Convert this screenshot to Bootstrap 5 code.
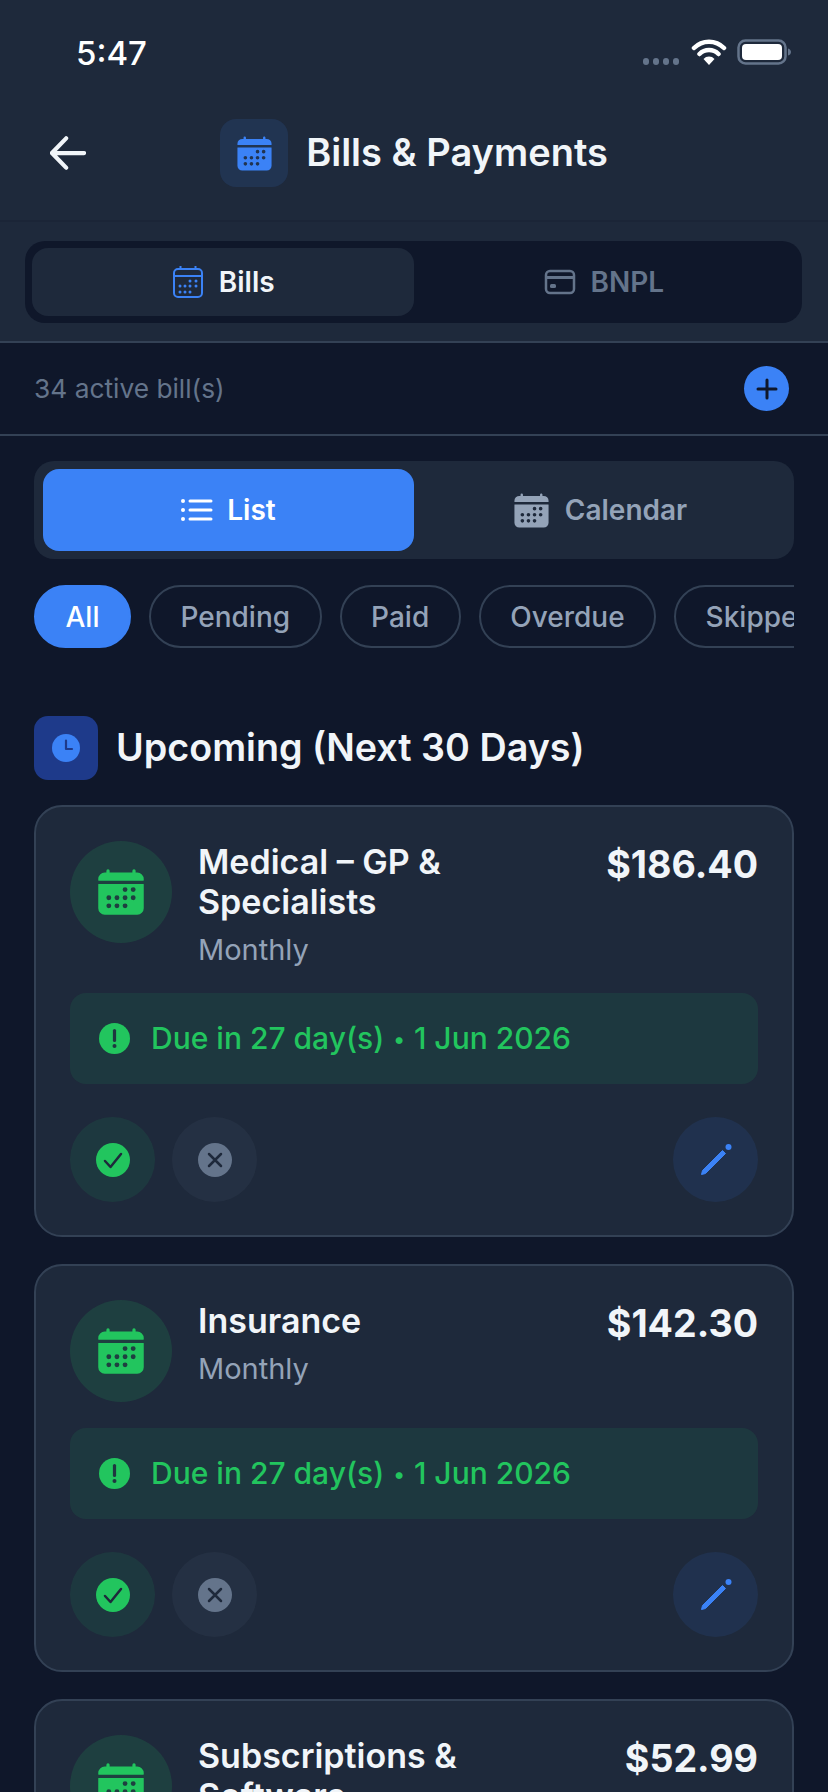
<!DOCTYPE html>
<html lang="en">
<head>
  <meta charset="UTF-8" />
  <meta name="viewport" content="width=device-width, initial-scale=1.0"/>
  <title>Bills &amp; Payments</title>
  <link href="https://cdn.jsdelivr.net/npm/bootstrap@5.3.4/dist/css/bootstrap.min.css" rel="stylesheet"/>
  <style>
    html, body { height: 1792px; overflow: hidden; }
    body { background-color: #0f172a; color: #f1f5f9; font-family: Inter, "Liberation Sans", sans-serif; }
    .top-pane { background-color: #1e293b; }
    .status-row { height: 96px; padding: 8px 35px 0 76px; }
    .clock-text { font-size: 33px; font-weight: 500; color: #fff; margin-top: 3px; }
    .signal-dot { width: 6px; height: 7px; border-radius: 3px; background-color: #64748b; margin-right: 4px; margin-top: 19px; }
    .wifi-icon { margin-left: 8px; margin-right: 10px; }
    .app-header { height: 126px; padding: 0 0 10px; border-bottom: 2px solid #1b2537; }
    .header-side { width: 120px; padding-left: 50px; }
    .header-icon { width: 68px; height: 68px; border-radius: 16px; background-color: rgba(59,130,246,.12); color: #3b82f6; }
    .header-title { font-size: 38px; font-weight: 600; margin: 0 0 0 18px; }
    .tab-wrap { padding: 19px 26px 18px 25px; }
    .tab-track { height: 82px; padding: 7px; border-radius: 20px; background-color: #0f172a; }
    .tab-item { border-radius: 16px; font-size: 28px; font-weight: 600; color: #64748b; gap: 14px; height: 68px; }
    .tab-item.is-on { background-color: #1e293b; color: #f1f5f9; }
    .tab-cal { color: #3b82f6; }
    .summary-row { height: 95px; padding: 0 39px 0 34px; border-top: 2px solid #334155; border-bottom: 2px solid #334155; font-size: 26.3px; color: #64748b; }
    .add-btn { width: 45px; height: 45px; border-radius: 50%; background-color: #3b82f6; color: #0f172a; }
    .page-body { padding: 25px 34px 0; }
    .view-track { height: 98px; padding: 8px 9px; border-radius: 20px; background-color: #1e293b; }
    .view-item { height: 82px; border-radius: 16px; font-size: 28px; font-weight: 600; color: #94a3b8; gap: 14px; }
    .view-item.is-on { background-color: #3b82f6; color: #fff; }
    .chip-row { margin-top: 26px; gap: 18px; overflow: hidden; }
    .chip-item { height: 63px; padding: 0 29.5px; border: 2px solid #334155; border-radius: 32px; font-size: 28px; font-weight: 500; color: #94a3b8; white-space: nowrap; flex-shrink: 0; }
    .chip-item.is-on { background-color: #3b82f6; border-color: #3b82f6; color: #fff; }
    .section-head { margin-top: 68px; margin-bottom: 25px; gap: 18px; }
    .section-icon { width: 64px; height: 64px; border-radius: 14px; background-color: #1e3a8a; color: #3b82f6; }
    .section-title { font-size: 37.7px; font-weight: 600; margin: 0; }
    .bill-card { background-color: #1e293b; border: 2px solid #334155; border-radius: 28px; padding: 34px 34px 33px; margin-bottom: 27px; }
    .bill-top { gap: 26px; margin-bottom: 26px; }
    .bill-icon { width: 102px; height: 102px; border-radius: 50%; background-color: rgba(34,197,94,.15); color: #22c55e; flex-shrink: 0; }
    .bill-name { font-size: 34px; font-weight: 600; line-height: 40px; padding-top: 1px; }
    .bill-freq { font-size: 29px; line-height: 35px; margin-top: 10px; color: #94a3b8; }
    .bill-amount { font-size: 37.6px; font-weight: 700; line-height: 50px; margin-top: -1px; white-space: nowrap; }
    .due-box { height: 91px; padding-left: 29px; gap: 21px; border-radius: 16px; background-color: rgba(34,197,94,.1); color: #22c55e; font-size: 30px; font-weight: 500; }
    .due-dot { font-size: 22px; vertical-align: 2px; margin: 0 1px; }
    .action-row { margin-top: 33px; }
    .round-btn { width: 85px; height: 85px; border-radius: 50%; }
    .round-ok { background-color: rgba(34,197,94,.1); color: #22c55e; }
    .round-skip { background-color: rgba(100,116,139,.1); color: #64748b; margin-left: 17px; }
    .round-edit { background-color: rgba(59,130,246,.1); color: #3b82f6; }
  </style>
</head>
<body>
  <svg width="0" height="0" class="d-block">
    <symbol id="cal-fill" viewBox="0 0 512 512">
      <path fill="currentColor" fill-rule="evenodd" d="M480 128a64 64 0 00-64-64h-16V48.45c0-8.61-6.62-16-15.23-16.43A16 16 0 00368 48v16H144V48.45c0-8.61-6.62-16-15.23-16.43A16 16 0 00112 48v16H96a64 64 0 00-64 64v12a4 4 0 004 4h440a4 4 0 004-4zM32 416a64 64 0 0064 64h320a64 64 0 0064-64V179a3 3 0 00-3-3H35a3 3 0 00-3 3zm344-208a24 24 0 11-24 24 24 24 0 0124-24zm0 80a24 24 0 11-24 24 24 24 0 0124-24zm-80-80a24 24 0 11-24 24 24 24 0 0124-24zm0 80a24 24 0 11-24 24 24 24 0 0124-24zm0 80a24 24 0 11-24 24 24 24 0 0124-24zm-80-80a24 24 0 11-24 24 24 24 0 0124-24zm0 80a24 24 0 11-24 24 24 24 0 0124-24zm-80-80a24 24 0 11-24 24 24 24 0 0124-24zm0 80a24 24 0 11-24 24 24 24 0 0124-24z"/>
    </symbol>
    <symbol id="cal-line" viewBox="0 0 34 34">
      <g fill="none" stroke="currentColor" stroke-width="2"><rect x="3" y="4" width="28" height="28" rx="4"/><path d="M3 11h28M9.500 1v4M24.500 1v4"/></g>
      <g fill="currentColor"><circle cx="19" cy="16" r="1.500"/><circle cx="25" cy="16" r="1.500"/><circle cx="9" cy="21" r="1.500"/><circle cx="14" cy="21" r="1.500"/><circle cx="19" cy="21" r="1.500"/><circle cx="25" cy="21" r="1.500"/><circle cx="9" cy="27" r="1.500"/><circle cx="14" cy="27" r="1.500"/><circle cx="19" cy="27" r="1.500"/></g>
    </symbol>
    <symbol id="check-dot" viewBox="0 0 34 34">
      <circle cx="17" cy="17" r="17" fill="currentColor"/>
      <path d="M9 18l5.500 6L25 11" fill="none" stroke="#1e293b" stroke-width="2.500" stroke-linecap="round" stroke-linejoin="round"/>
    </symbol>
    <symbol id="skip-dot" viewBox="0 0 34 34">
      <circle cx="17" cy="17" r="17" fill="currentColor"/>
      <path d="M11 11l12 12M23 11L11 23" fill="none" stroke="#1e293b" stroke-width="2.500" stroke-linecap="round"/>
    </symbol>
    <symbol id="pencil" viewBox="0 0 40 40">
      <path d="M5.500 34.500l1-4L26.500 10.500l3 3-20 20z" fill="currentColor" stroke="currentColor" stroke-width="1" stroke-linejoin="round"/>
      <circle cx="32.500" cy="7" r="3" fill="currentColor"/>
    </symbol>
    <symbol id="alert-dot" viewBox="0 0 31 31">
      <circle cx="15.500" cy="15.500" r="15.500" fill="currentColor"/>
      <path d="M15.500 7.500v10" stroke="#1f3740" stroke-width="3.200" stroke-linecap="round"/>
      <circle cx="15.500" cy="23" r="2" fill="#1f3740"/>
    </symbol>
  </svg>

  <div class="top-pane">
    <div class="status-row d-flex align-items-center justify-content-between">
      <span class="clock-text">5:47</span>
      <div class="d-flex align-items-center">
        <span class="signal-dot"></span><span class="signal-dot"></span><span class="signal-dot"></span><span class="signal-dot"></span>
        <svg class="wifi-icon" width="36" height="28" viewBox="0 0 36 28">
          <path d="M3 10a21 21 0 0 1 30 0M8.500 16a13.500 13.500 0 0 1 19 0" fill="none" stroke="#fff" stroke-width="4.500" stroke-linecap="round"/>
          <path d="M12.500 21a7.500 7.500 0 0 1 11 0L18 27z" fill="#fff"/>
        </svg>
        <svg width="56" height="26" viewBox="0 0 56 26">
          <rect x="1.500" y="1.500" width="47" height="23" rx="7" fill="none" stroke="#64748b" stroke-width="2.500"/>
          <rect x="5" y="5" width="40" height="16" rx="4" fill="#fff"/>
          <path d="M51 9.500c2 .5 3 2 3 3.500s-1 3-3 3.500z" fill="#64748b"/>
        </svg>
      </div>
    </div>

    <div class="app-header d-flex align-items-center">
      <div class="header-side">
        <svg class="d-block" width="36" height="34" viewBox="0 0 38 36"><path d="M36 18H3M17 2.500L2 18l15 15.500" fill="none" stroke="#f1f5f9" stroke-width="4.500" stroke-linecap="round" stroke-linejoin="round"/></svg>
      </div>
      <div class="flex-grow-1 d-flex align-items-center justify-content-center">
        <div class="header-icon d-flex align-items-center justify-content-center">
          <svg width="39" height="39"><use href="#cal-fill"/></svg>
        </div>
        <h1 class="header-title">Bills &amp; Payments</h1>
      </div>
      <div class="header-side"></div>
    </div>

    <div class="tab-wrap">
      <div class="tab-track row g-0">
        <div class="col-6 tab-item is-on d-flex align-items-center justify-content-center">
          <svg class="tab-cal" width="34" height="34"><use href="#cal-line"/></svg>
          <span>Bills</span>
        </div>
        <div class="col-6 tab-item d-flex align-items-center justify-content-center">
          <svg width="32" height="26" viewBox="0 0 32 26"><rect x="2" y="2" width="28" height="22" rx="4" fill="none" stroke="currentColor" stroke-width="2.500"/><path d="M2 7h28v3H2z" fill="currentColor"/><rect x="6" y="15" width="6" height="4" rx="1.500" fill="currentColor"/></svg>
          <span>BNPL</span>
        </div>
      </div>
    </div>
  </div>

  <div class="summary-row d-flex align-items-center justify-content-between">
    <span>34 active bill(s)</span>
    <div class="add-btn d-flex align-items-center justify-content-center">
      <svg width="22" height="22" viewBox="0 0 22 22"><path d="M11 2v18M2 11h18" fill="none" stroke="currentColor" stroke-width="3" stroke-linecap="round"/></svg>
    </div>
  </div>

  <div class="page-body">
    <div class="view-track row g-0">
      <div class="col-6 view-item is-on d-flex align-items-center justify-content-center">
        <svg width="32" height="24" viewBox="0 0 32 24"><path d="M9 3h21M9 12h21M9 21h21" fill="none" stroke="currentColor" stroke-width="3" stroke-linecap="round"/><circle cx="2" cy="3" r="2" fill="currentColor"/><circle cx="2" cy="12" r="2" fill="currentColor"/><circle cx="2" cy="21" r="2" fill="currentColor"/></svg>
        <span>List</span>
      </div>
      <div class="col-6 view-item d-flex align-items-center justify-content-center">
        <svg width="39" height="39"><use href="#cal-fill"/></svg>
        <span>Calendar</span>
      </div>
    </div>

    <div class="chip-row d-flex">
      <div class="chip-item is-on d-flex align-items-center">All</div>
      <div class="chip-item d-flex align-items-center">Pending</div>
      <div class="chip-item d-flex align-items-center">Paid</div>
      <div class="chip-item d-flex align-items-center">Overdue</div>
      <div class="chip-item d-flex align-items-center">Skipped</div>
    </div>

    <div class="section-head d-flex align-items-center">
      <div class="section-icon d-flex align-items-center justify-content-center">
        <svg width="28" height="28" viewBox="0 0 28 28"><circle cx="14" cy="14" r="14" fill="currentColor"/><path d="M14 6.500V15h6" fill="none" stroke="#1e3a8a" stroke-width="2.200" stroke-linecap="round" stroke-linejoin="round"/></svg>
      </div>
      <h2 class="section-title">Upcoming (Next 30 Days)</h2>
    </div>

    <div class="bill-card">
      <div class="bill-top d-flex">
        <div class="bill-icon d-flex align-items-center justify-content-center"><svg width="52" height="52"><use href="#cal-fill"/></svg></div>
        <div class="flex-grow-1">
          <div class="bill-name">Medical – GP &amp;<br>Specialists</div>
          <div class="bill-freq">Monthly</div>
        </div>
        <div class="bill-amount">$186.40</div>
      </div>
      <div class="due-box d-flex align-items-center">
        <svg width="31" height="31"><use href="#alert-dot"/></svg>
        <span>Due in 27 day(s) <span class="due-dot">•</span> 1 Jun 2026</span>
      </div>
      <div class="action-row d-flex align-items-center">
        <div class="round-btn round-ok d-flex align-items-center justify-content-center"><svg width="34" height="34"><use href="#check-dot"/></svg></div>
        <div class="round-btn round-skip d-flex align-items-center justify-content-center"><svg width="34" height="34"><use href="#skip-dot"/></svg></div>
        <div class="round-btn round-edit d-flex align-items-center justify-content-center ms-auto"><svg width="40" height="40"><use href="#pencil"/></svg></div>
      </div>
    </div>

    <div class="bill-card">
      <div class="bill-top d-flex">
        <div class="bill-icon d-flex align-items-center justify-content-center"><svg width="52" height="52"><use href="#cal-fill"/></svg></div>
        <div class="flex-grow-1">
          <div class="bill-name">Insurance</div>
          <div class="bill-freq">Monthly</div>
        </div>
        <div class="bill-amount">$142.30</div>
      </div>
      <div class="due-box d-flex align-items-center">
        <svg width="31" height="31"><use href="#alert-dot"/></svg>
        <span>Due in 27 day(s) <span class="due-dot">•</span> 1 Jun 2026</span>
      </div>
      <div class="action-row d-flex align-items-center">
        <div class="round-btn round-ok d-flex align-items-center justify-content-center"><svg width="34" height="34"><use href="#check-dot"/></svg></div>
        <div class="round-btn round-skip d-flex align-items-center justify-content-center"><svg width="34" height="34"><use href="#skip-dot"/></svg></div>
        <div class="round-btn round-edit d-flex align-items-center justify-content-center ms-auto"><svg width="40" height="40"><use href="#pencil"/></svg></div>
      </div>
    </div>

    <div class="bill-card">
      <div class="bill-top d-flex">
        <div class="bill-icon d-flex align-items-center justify-content-center"><svg width="52" height="52"><use href="#cal-fill"/></svg></div>
        <div class="flex-grow-1">
          <div class="bill-name">Subscriptions &amp;<br>Software</div>
          <div class="bill-freq">Monthly</div>
        </div>
        <div class="bill-amount">$52.99</div>
      </div>
    </div>
  </div>
</body>
</html>
